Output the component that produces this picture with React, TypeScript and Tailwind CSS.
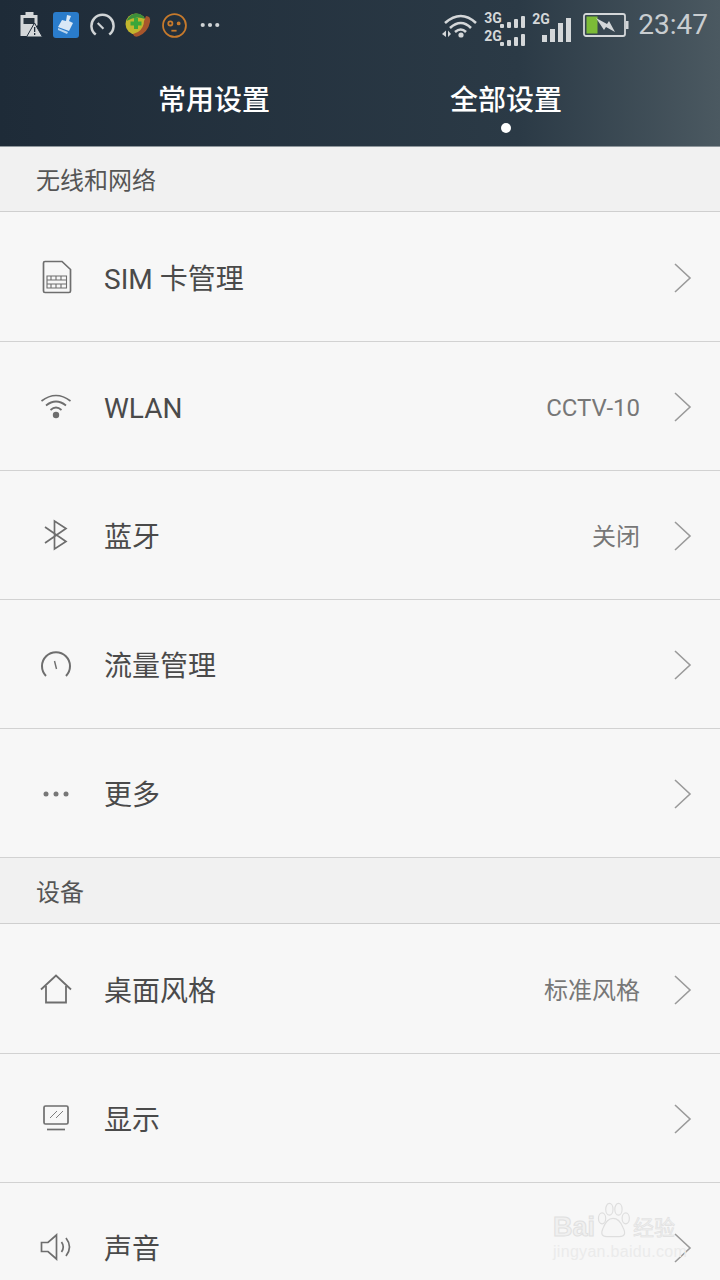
import React from "react";

const S = "fill-none stroke-[#6e6e6e]";

function Chevron() {
  return (
    <svg width="20" height="32" viewBox="0 0 20 32" className="mt-[2px] fill-none stroke-[#9a9a9a]" strokeWidth="1.6">
      <path d="M2 2 L17 16 L2 30" />
    </svg>
  );
}

const SimIcon = (
  <svg width="30" height="34" viewBox="0 0 30 34" className={`ml-[1px] ${S}`} strokeWidth="1.7">
    <path d="M3 1.5 H20 L28.5 9.5 V31 Q28.5 32.5 27 32.5 H3 Q1.5 32.5 1.5 31 V3 Q1.5 1.5 3 1.5 Z" />
    <path d="M5 16 H24.5 V28 H5 Z M9 16 V20 M14 16 V20 M19 16 V20 M5 20 H24.5 M5 24 H24.5 M9 24 V28 M14 24 V28 M19 24 V28" strokeWidth="1.1" />
  </svg>
);
const WifiIcon = (
  <svg width="32" height="26" viewBox="0 0 32 26" className={S} strokeWidth="1.7">
    <path d="M1.5 8 Q16 -3 30.5 8" />
    <path d="M6 12.5 Q16 4.5 26 12.5" />
    <path d="M10.5 17 Q16 12 21.5 17" />
    <circle cx="16" cy="22" r="3.2" fill="#6e6e6e" stroke="none" />
  </svg>
);
const BtIcon = (
  <svg width="26" height="32" viewBox="0 0 26 32" className={S} strokeWidth="1.7">
    <path d="M2 8 L23 22.5 L11.5 30 V2 L23 9.5 L2 24" />
  </svg>
);
const GaugeIcon = (
  <svg width="32" height="28" viewBox="0 0 32 28" className={S} strokeWidth="2">
    <path d="M6 26 A14 14 0 1 1 26 26" />
    <path d="M14.5 11 L16.5 19" strokeWidth="1.4" />
  </svg>
);
const DotsIcon = (
  <svg width="26" height="6" viewBox="0 0 26 6" fill="#777" className="mt-[2px]">
    <circle cx="3" cy="3" r="2.5" />
    <circle cx="13" cy="3" r="2.5" />
    <circle cx="23" cy="3" r="2.5" />
  </svg>
);
const HomeIcon = (
  <svg width="32" height="30" viewBox="0 0 32 30" className={S} strokeWidth="1.8">
    <path d="M1 15.5 L16 1.5 L31 15.5" />
    <path d="M6 12 V28.5 H26 V12" />
  </svg>
);
const DisplayIcon = (
  <svg width="26" height="26" viewBox="0 0 26 26" className={S} strokeWidth="1.7">
    <rect x="1" y="1" width="24" height="18" rx="1.5" />
    <path d="M7 13 L14 6 M13 13 L20 6" strokeWidth="0.9" />
    <path d="M4 24.5 H22" />
  </svg>
);
const SoundIcon = (
  <svg width="32" height="28" viewBox="0 0 32 28" className={S} strokeWidth="1.7">
    <path d="M1.5 9.5 H8 L16.5 2 V26 L8 18.5 H1.5 Z" />
    <path d="M21.5 9 Q25 14 21.5 19" />
    <path d="M26 5 Q33 14 26 23" />
  </svg>
);

function Row({ icon, title, value, tall }: { icon: React.ReactNode; title: string; value?: string; tall?: boolean }) {
  return (
    <div className={`flex shrink-0 items-center border-b border-[#d2d2d2] pl-[36px] pr-[27px] ${tall ? "h-[130px]" : "h-[129px]"}`}>
      <div className="flex w-[40px] justify-center">{icon}</div>
      <div className="ml-[28px] flex-1 pt-[6px] text-[28px] leading-none text-[#4a4a4a]">{title}</div>
      {value && <div className="mr-[33px] pt-[4px] text-[24px] leading-none text-[#777777]">{value}</div>}
      <Chevron />
    </div>
  );
}

function Section({ title, tall }: { title: string; tall?: boolean }) {
  return (
    <div className={`flex shrink-0 items-center border-b border-[#cfcfcf] bg-[#f1f1f1] pl-[36px] pt-[4px] text-[24px] leading-none text-[#555555] ${tall ? "h-[66px]" : "h-[65px]"}`}>
      {title}
    </div>
  );
}

function StatusLeft() {
  return (
    <div className="flex items-center gap-[10px] pl-[18px]">
      <svg width="25" height="26" viewBox="0 0 24 26">
        <path d="M7 0 H15 V3 H19 V13 L12 24 H2 V3 H7 Z" fill="#d4d7d9" />
        <path d="M5 6 H16 V12 H5 Z" fill="#28343f" />
        <path d="M16 11 L24 25 H8 Z" fill="#d4d7d9" stroke="#1f2c39" strokeWidth="1" />
        <path d="M15.5 15 H16.8 V20 H15.5 Z M15.5 21 H16.8 V23 H15.5 Z" fill="#1f2c39" />
      </svg>
      <svg width="26" height="26" viewBox="0 0 26 26">
        <rect width="26" height="26" rx="3" fill="#2a7ccb" />
        <path d="M14 3 L18 4 L16 9 L20 11 L16 19 L5 15 L9 8 L13 9 Z" fill="#d9e8f6" />
        <path d="M5 16 L15 20 L14 22 L5 18 Z" fill="#b8d4ee" />
      </svg>
      <svg width="25" height="24" viewBox="0 0 26 24" className="ml-[1px] fill-none stroke-[#d0d4d6]" strokeWidth="2.6">
        <path d="M6 22 A11.5 11.5 0 1 1 20 22" />
        <path d="M8 10 L14 16" strokeWidth="2.2" />
      </svg>
      <svg width="26" height="26" viewBox="0 0 26 26">
        <circle cx="11" cy="12" r="10.5" fill="#c2b62e" />
        <path d="M1.5 9 Q5 1 12 1.5 Q18 2 20 7 Q11 3 1.5 9 Z" fill="#3d8f3a" />
        <path d="M9 6 H13 V9.5 H16.5 V13.5 H13 V17 H9 V13.5 H5.5 V9.5 H9 Z" fill="#3aa63a" />
        <path d="M21 4 Q26 4 25 10 Q23 20 14 24 Q9 26 8 22 L13 20 Q19 16 19 9 Z" fill="#a8562c" />
      </svg>
      <svg width="25" height="25" viewBox="0 0 24 24" className="ml-[1px] fill-none stroke-[#c77a2c]" strokeWidth="1.7">
        <circle cx="12" cy="12" r="11" />
        <circle cx="8" cy="10" r="2" />
        <circle cx="16" cy="10" r="1" />
        <path d="M9 17 H14" />
      </svg>
      <svg width="20" height="6" viewBox="0 0 22 6" fill="#d0d4d6" className="ml-[3px]">
        <circle cx="3" cy="3" r="2.3" />
        <circle cx="11" cy="3" r="2.3" />
        <circle cx="19" cy="3" r="2.3" />
      </svg>
    </div>
  );
}

function Bars() {
  return (
    <div className="flex items-end gap-[3px]">
      <div className="h-[4px] w-[4px] rounded-[1px] bg-[#d4d7d9]" />
      <div className="h-[6px] w-[4px] rounded-[1px] bg-[#d4d7d9]" />
      <div className="h-[9px] w-[4px] rounded-[1px] bg-[#d4d7d9]" />
      <div className="h-[12px] w-[4px] rounded-[1px] bg-[#d4d7d9]" />
    </div>
  );
}

function StatusRight() {
  const small = "mb-[3px] w-[16px] whitespace-nowrap text-[14px] font-bold leading-[14px] text-[#d4d7d9]";
  return (
    <div className="flex items-center pr-[12px]">
      <svg width="36" height="26" viewBox="0 0 36 26" className="fill-none stroke-[#d4d7d9]" strokeWidth="2.6">
        <path d="M3 11 Q19 -3 34 11" />
        <path d="M8 16 Q19 6 29 16" />
        <path d="M13 20 Q19 15 24 20" />
        <circle cx="19" cy="23" r="2.6" fill="#d4d7d9" stroke="none" />
        <path d="M0 22 L4 18.5 V25 Z M6 18.5 L9 22 L6 25 Z" fill="#d4d7d9" stroke="none" />
      </svg>
      <div className="ml-[6px] flex flex-col gap-[1px] self-start pt-[6px]">
        <div className="flex items-end">
          <span className={small}>3G</span>
          <Bars />
        </div>
        <div className="flex items-end">
          <span className={small}>2G</span>
          <Bars />
        </div>
      </div>
      <div className="ml-[7px] flex items-end self-start pt-[7px]">
        <span className="mb-[16px] w-[10px] whitespace-nowrap text-[14px] font-bold leading-[14px] text-[#d4d7d9]">2G</span>
        <div className="flex items-end gap-[3px]">
          <div className="h-[7px] w-[5px] bg-[#d4d7d9]" />
          <div className="h-[13px] w-[5px] bg-[#d4d7d9]" />
          <div className="h-[19px] w-[5px] bg-[#d4d7d9]" />
          <div className="h-[24px] w-[5px] bg-[#d4d7d9]" />
        </div>
      </div>
      <svg width="46" height="24" viewBox="0 0 46 24" className="ml-[12px]">
        <rect x="1" y="1" width="41" height="22" rx="2" fill="none" stroke="#d4d7d9" strokeWidth="1.8" />
        <rect x="43" y="8" width="2.5" height="8" fill="#d4d7d9" />
        <rect x="3.5" y="3.5" width="11" height="17" fill="#7cbb37" />
        <path d="M13 5 L24 11 L26 8 L32 19 L23 14 L21 17 Z" fill="#d4d7d9" />
      </svg>
      <span className="ml-[9px] font-['Roboto',sans-serif] text-[28px] leading-none text-[#c9cdd0]">23:47</span>
    </div>
  );
}

export default function App() {
  const cjk = "font-['Roboto','Noto_Sans_CJK_SC',sans-serif]";
  return (
    <div className={`relative flex h-[1280px] w-[720px] flex-col overflow-hidden bg-[#f7f7f7] ${cjk}`}>
      <div className="h-[147px] shrink-0 border-b border-[#8f979c] bg-gradient-to-r from-[#1e2b38] via-[#2b3a46] via-72% to-[#4b5961]">
        <div className="flex h-[50px] items-center justify-between">
          <StatusLeft />
          <StatusRight />
        </div>
        <div className="flex h-[96px] gap-[72px] pl-[104px]">
          <div className="flex h-[96px] w-[220px] items-center justify-center pt-[6px] text-[28px] font-medium leading-none text-white">常用设置</div>
          <div className="relative flex h-[96px] w-[220px] items-center justify-center pt-[6px] text-[28px] font-medium leading-none text-white">
            全部设置
            <div className="absolute left-[105px] top-[73px] h-[10px] w-[10px] rounded-full bg-white" />
          </div>
        </div>
      </div>
      <Section title="无线和网络" />
      <Row icon={SimIcon} title="SIM 卡管理" tall />
      <Row icon={WifiIcon} title="WLAN" value="CCTV-10" />
      <Row icon={BtIcon} title="蓝牙" value="关闭" />
      <Row icon={GaugeIcon} title="流量管理" />
      <Row icon={DotsIcon} title="更多" />
      <Section title="设备" tall />
      <Row icon={HomeIcon} title="桌面风格" value="标准风格" tall />
      <Row icon={DisplayIcon} title="显示" />
      <Row icon={SoundIcon} title="声音" />

      <div className="absolute left-[553px] top-[1202px] w-[140px] select-none">
        <div className="flex items-end">
          <span className="font-['Liberation_Sans',sans-serif] text-[27px] font-bold leading-[30px] text-[#f0f0f0] [-webkit-text-stroke:1px_#e0e0e0]">Bai</span>
          <svg width="38" height="40" viewBox="0 0 40 44" className="-ml-[1px]" fill="#f6f6f6" stroke="#dedede" strokeWidth="1.3">
            <ellipse cx="8" cy="18" rx="4" ry="6" />
            <ellipse cx="16" cy="8" rx="4" ry="6.5" />
            <ellipse cx="26" cy="8" rx="4" ry="6.5" />
            <ellipse cx="34" cy="18" rx="4" ry="6" />
            <path d="M20 18 Q27 18 31 28 Q36 38 27 38 H13 Q5 38 9 29 Q13 18 20 18 Z" />
          </svg>
          <span className="ml-[1px] whitespace-nowrap text-[21px] leading-[28px] text-[#efefef] [-webkit-text-stroke:0.6px_#e0e0e0]">经验</span>
        </div>
        <div className="mt-[1px] whitespace-nowrap font-['Liberation_Sans',sans-serif] text-[16px] leading-[18px] tracking-[0.3px] text-[#ebebeb]">jingyan.baidu.com</div>
      </div>
    </div>
  );
}
